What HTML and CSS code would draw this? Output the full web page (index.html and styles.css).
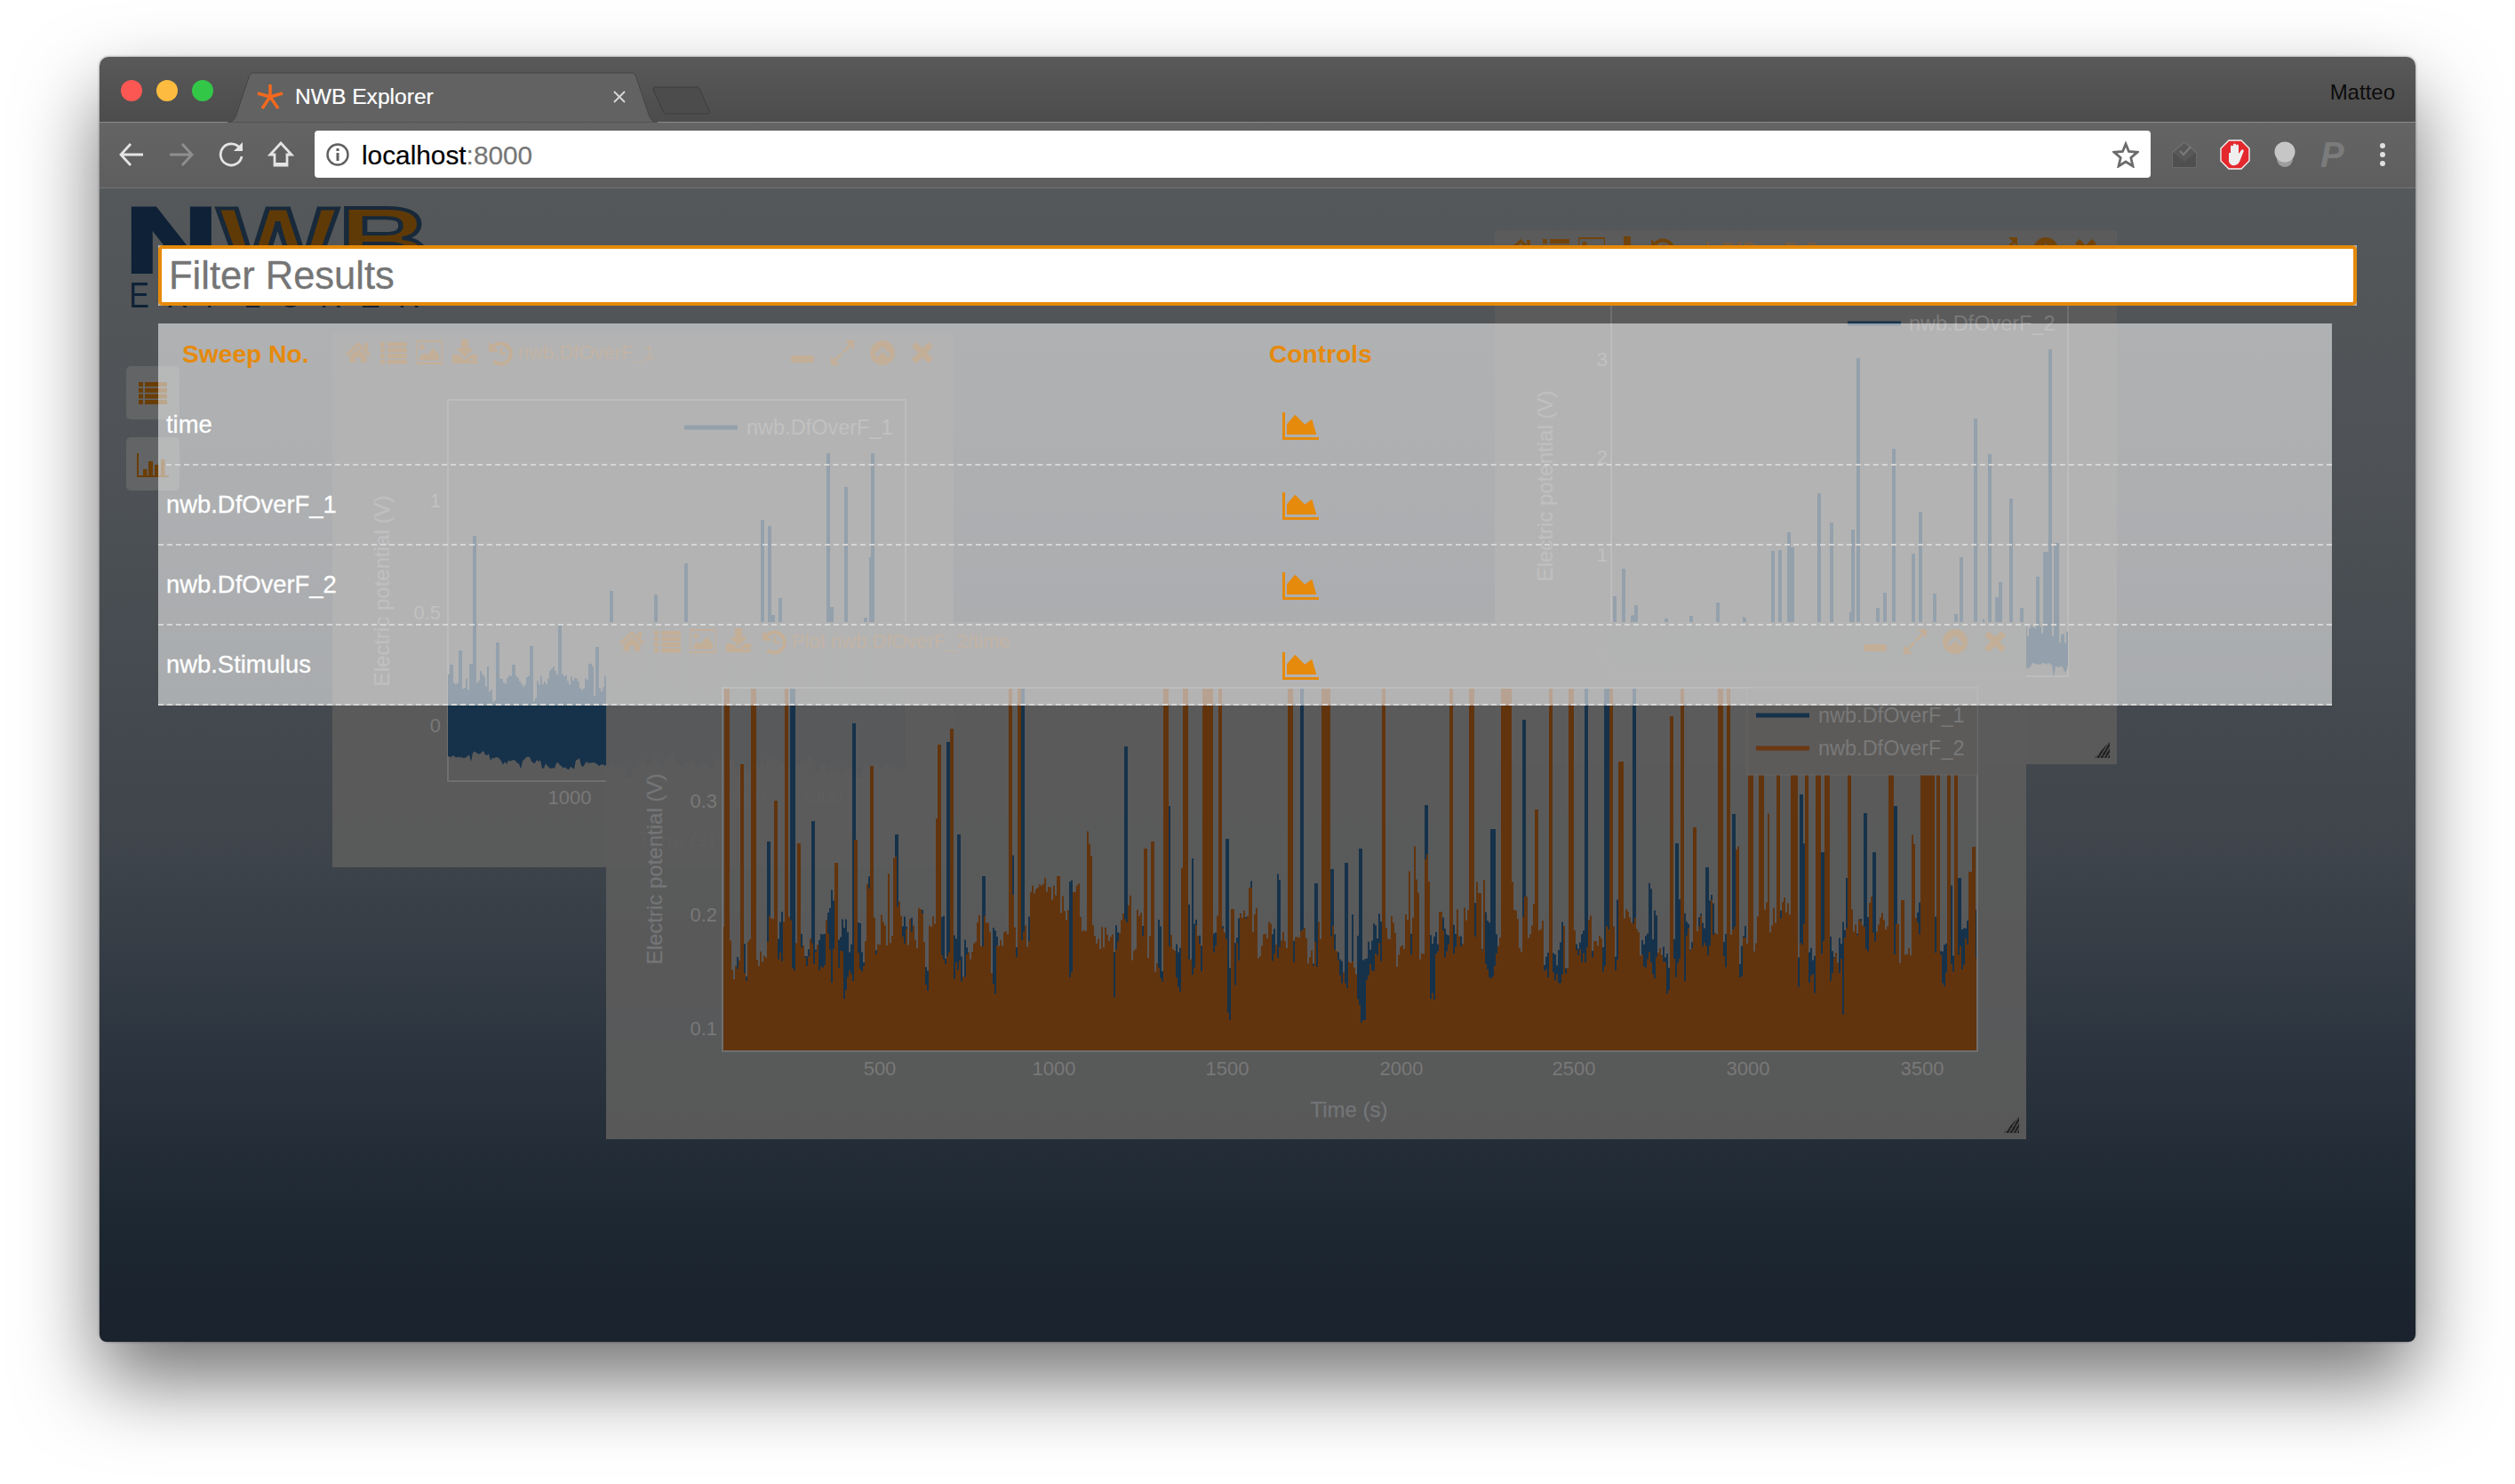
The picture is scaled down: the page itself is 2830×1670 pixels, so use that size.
FILE: index.html
```html
<!DOCTYPE html>
<html lang="en">

<head>
    <meta charset="UTF-8">
    <title>NWB Explorer</title>
    <link rel="stylesheet" href="styles.css">
</head>

<body>
    <svg class="sprites" width="0" height="0">
        <symbol id="i-home" viewBox="0 0 30 30"><path d="M15 3 L29 16 L27 18.500 L15 7.500 L3 18.500 L1 16 Z M5.500 18 L15 10 L24.500 18 V26 H18 V20 H12 V26 H5.500 Z M22 4h4v8l-4-3.500z"/></symbol>
        <symbol id="i-list" viewBox="0 0 30 30"><path d="M0 3h5v5H0z M8 3h22v5H8z M0 9.500h5v5H0z M8 9.500h22v5H8z M0 16h5v5H0z M8 16h22v5H8z M0 22.500h5v5H0z M8 22.500h22v5H8z"/></symbol>
        <symbol id="i-image" viewBox="0 0 30 30"><rect x="0" y="2" width="30" height="25" rx="2" fill="none" stroke="currentColor" stroke-width="2.200"/><circle cx="7" cy="8.500" r="2.800"/><path d="M4 23.500 V20 L9.500 15 L12.500 18 L19 9.500 L26 17 V23.500 Z"/></symbol>
        <symbol id="i-download" viewBox="0 0 30 30"><path d="M11 0h8v10h6L15 20 5 10h6z"/><path fill-rule="evenodd" d="M1 17h7l7 6 7-6h7v10H1z M20 22h3v2h-3z M25 22h2v2h-2z"/></symbol>
        <symbol id="i-undo" viewBox="0 0 30 30"><path d="M7 8 A11.500 11.500 0 1 1 7.500 24.500" fill="none" stroke="currentColor" stroke-width="4.200"/><path d="M2 3 V14 H13 Z"/><path d="M16 9 V16 H21" fill="none" stroke="currentColor" stroke-width="2.500"/></symbol>
        <symbol id="i-minus" viewBox="0 0 30 30"><rect x="2" y="18" width="26" height="8" rx="3"/></symbol>
        <symbol id="i-expand" viewBox="0 0 30 30"><path d="M18 1H28V11L24.500 7.500 L17 15 L15 13 L22.500 5.500Z M12 29H2V19L5.500 22.500 L13 15 L15 17 L7.500 24.500Z"/></symbol>
        <symbol id="i-collapse" viewBox="0 0 30 30"><path fill-rule="evenodd" d="M15 1a14 14 0 1 0 .01 0Z M15 8 L24 17 L21 20 L15 14 L9 20 L6 17Z"/></symbol>
        <symbol id="i-close" viewBox="0 0 30 30"><path d="M8 3 L15 10 L22 3 L27 8 L20 15 L27 22 L22 27 L15 20 L8 27 L3 22 L10 15 L3 8Z"/></symbol>
        <symbol id="i-area" viewBox="0 0 41 31"><path d="M0 0h3v28h38v3H0z"/><path d="M5 13.300 L14.300 2.700 L25.300 13.700 L33.300 7.700 L38.300 25 H5 Z"/></symbol>
    </svg>

    <div class="window">
        <div class="tabstrip">
            <div class="lights">
                <span class="light red"></span>
                <span class="light yellow"></span>
                <span class="light green"></span>
            </div>
            <div class="tab">
                <svg class="tab-shape" width="484" height="57" viewBox="0 0 484 57">
                    <path d="M0 57 C6 57 9 52 11 45 L24 6 C25 2 27 1 30 1 H454 C457 1 459 2 460 6 L473 45 C475 52 478 57 484 57 Z" fill="#626262" stroke="#444" stroke-width="1"/>
                </svg>
                <svg class="favicon" width="30" height="30" viewBox="0 0 30 30">
                    <path d="M15 1 V15 M15 15 L1 11 M15 15 L29 11 M15 15 L6 28 M15 15 L24 28" stroke="#f4691e" stroke-width="3.500" fill="none"/>
                </svg>
                <span class="tab-title">NWB Explorer</span>
                <svg class="tab-close" width="14" height="14" viewBox="0 0 14 14">
                    <path d="M1 1 L13 13 M13 1 L1 13" stroke="#d8d8d8" stroke-width="1.800"/>
                </svg>
            </div>
            <svg class="newtab" width="66" height="32" viewBox="0 0 66 32">
                <path d="M3 1 H50 C52 1 53 2 54 4 L64 28 C65 30 64 31 62 31 H16 C14 31 13 30 12 28 L1 4 C1 2 1 1 3 1 Z" fill="#4c4c4c" stroke="#3d3d3d"/>
            </svg>
            <span class="user">Matteo</span>
        </div>

        <div class="toolbar">
            <div class="nav">
                <svg width="30" height="30" viewBox="0 0 30 30"><path d="M28 15 H4 M14 3 L3 15 L14 27" fill="none" stroke="#e4e4e4" stroke-width="2.800"/></svg>
                <svg width="30" height="30" viewBox="0 0 30 30"><path d="M2 15 H26 M16 3 L27 15 L16 27" fill="none" stroke="#8f8f8f" stroke-width="2.800"/></svg>
                <svg width="30" height="30" viewBox="0 0 30 30"><path d="M25 8 A12 12 0 1 0 27 17" fill="none" stroke="#e4e4e4" stroke-width="2.800"/><path d="M18 11 H28 V1 Z" fill="#e4e4e4"/></svg>
                <svg width="30" height="30" viewBox="0 0 30 30"><path d="M15 2 L27 15 H22 V27 H8 V15 H3 Z" fill="none" stroke="#e4e4e4" stroke-width="2.800"/><path d="M8 24h14v4H8z" fill="#e4e4e4"/></svg>
            </div>
            <div class="omnibox">
                <svg width="26" height="26" viewBox="0 0 26 26"><circle cx="13" cy="13" r="11.500" fill="none" stroke="#5f5f5f" stroke-width="2.400"/><path d="M11.500 11h3v9h-3z M11.500 6h3v3h-3z" fill="#5f5f5f"/></svg>
                <span class="url">localhost<span class="url-port">:8000</span></span>
                <svg class="star" width="30" height="30" viewBox="0 0 30 30"><path d="M15 3 L18.500 11.500 L28 12.300 L20.800 18.500 L23 28 L15 23 L7 28 L9.200 18.500 L2 12.300 L11.500 11.500 Z" fill="none" stroke="#6b6b6b" stroke-width="2.800"/></svg>
            </div>
            <div class="extensions">
                <svg width="32" height="32" viewBox="0 0 32 32"><path d="M3 13 L16 2 L29 13 V30 H3 Z" fill="#585858" stroke="#6e6e6e" stroke-width="1.500"/><path d="M3 14 L16 24 L29 14 V30 H3 Z" fill="#4f4f4f"/><path d="M11 12 L15 16 L23 7" fill="none" stroke="#7c7c7c" stroke-width="2"/></svg>
                <svg width="34" height="34" viewBox="0 0 34 34"><path d="M10 1 H24 L33 10 V24 L24 33 H10 L1 24 V10 Z" fill="#e3292e" stroke="#f2f2f2" stroke-width="1.400"/><path d="M10 15 h2 V8 a1.500 1.500 0 0 1 3 0 V6 a1.500 1.500 0 0 1 3 0 V7 a1.500 1.500 0 0 1 3 0 V16 L24 12 a1.500 1.500 0 0 1 2.600 1.500 L22 25 C20 30 12 31 10 25 Z" fill="#efefef"/></svg>
                <svg width="30" height="32" viewBox="0 0 30 32"><circle cx="15" cy="21" r="9" fill="#9d9d9d"/><circle cx="15" cy="13" r="11.500" fill="#c6c6c6"/></svg>
                <svg width="32" height="44" viewBox="0 0 32 44"><text class="ext-p" x="1" y="36">P</text></svg>
                <svg width="30" height="32" viewBox="0 0 30 32"><circle cx="15" cy="6" r="3" fill="#e0e0e0"/><circle cx="15" cy="16" r="3" fill="#e0e0e0"/><circle cx="15" cy="26" r="3" fill="#e0e0e0"/></svg>
            </div>
        </div>

        <div class="content">
            <svg class="logo" width="335" height="119" viewBox="0 0 335 119">
                <text class="logo-big" x="-6" y="75" textLength="343" lengthAdjust="spacingAndGlyphs"><tspan class="logo-n">N</tspan><tspan class="logo-wb">WB</tspan></text>
                <text class="logo-small" x="-2" y="115" transform="scale(.85 1)" textLength="385">EXPLORER</text>
            </svg>
            <div class="sidebtn">
                <svg class="side-list" width="32" height="25" viewBox="0 0 32 25"><path d="M0 0h5v5H0z M7 0h25v5H7z M0 6.700h5v5H0z M7 6.700h25v5H7z M0 13.400h5v5H0z M7 13.400h25v5H7z M0 20h5v5H0z M7 20h25v5H7z"/></svg>
            </div>
            <div class="sidebtn">
                <svg class="side-bars" width="36" height="27" viewBox="0 0 36 27"><path d="M0 0h2v25h34v2H0z M7 18h4.500v7H7z M13 9h5v16h-5z M20 13h4.500v12H20z M27 7h4.500v18H27z"/></svg>
            </div>

            <div class="panel panel-one">
                <div class="panel-head">
                    <svg class="ico"><use href="#i-home"/></svg>
                    <svg class="ico"><use href="#i-list"/></svg>
                    <svg class="ico"><use href="#i-image"/></svg>
                    <svg class="ico"><use href="#i-download"/></svg>
                    <svg class="ico"><use href="#i-undo"/></svg>
                    <span class="panel-title">nwb.DfOverF_1</span>
                    <svg class="ico push"><use href="#i-minus"/></svg>
                    <svg class="ico"><use href="#i-expand"/></svg>
                    <svg class="ico"><use href="#i-collapse"/></svg>
                    <svg class="ico"><use href="#i-close"/></svg>
                </div>
                <svg class="plot" width="699" height="553" viewBox="0 0 699 553">
                    <rect class="frame" x="130" y="27" width="515" height="429"/>
                    <svg x="130" y="27" width="515" height="429"><path id="one-blue" class="blue"/></svg>
                    <line class="blue-line" x1="396" x2="456" y1="58" y2="58"/>
                    <text class="lbl" x="466" y="66">nwb.DfOverF_1</text>
                    <text class="tick end" x="122" y="148">1</text>
                    <text class="tick end" x="122" y="274">0.5</text>
                    <text class="tick end" x="122" y="401">0</text>
                    <text class="tick mid" x="267" y="482">1000</text>
                    <text class="tick mid" x="463" y="482">2000</text>
                    <text class="tick mid" x="550" y="482">3000</text>
                    <text class="axis mid" x="387" y="530">Time (s)</text>
                    <text class="axis mid" transform="translate(64 242) rotate(-90)">Electric potential (V)</text>
                </svg>
            </div>

            <div class="panel panel-two">
                <div class="panel-head">
                    <svg class="ico"><use href="#i-home"/></svg>
                    <svg class="ico"><use href="#i-list"/></svg>
                    <svg class="ico"><use href="#i-image"/></svg>
                    <svg class="ico"><use href="#i-download"/></svg>
                    <svg class="ico"><use href="#i-undo"/></svg>
                    <span class="panel-title">nwb.DfOverF_2</span>
                    <svg class="ico push"><use href="#i-minus"/></svg>
                    <svg class="ico"><use href="#i-expand"/></svg>
                    <svg class="ico"><use href="#i-collapse"/></svg>
                    <svg class="ico"><use href="#i-close"/></svg>
                </div>
                <svg class="plot" width="700" height="552" viewBox="0 0 700 552">
                    <rect class="frame" x="131" y="27" width="514" height="427"/>
                    <svg x="131" y="27" width="514" height="427"><path id="two-blue" class="blue"/></svg>
                    <line class="blue-line" x1="397" x2="457" y1="57" y2="57"/>
                    <text class="lbl" x="466" y="65">nwb.DfOverF_2</text>
                    <text class="tick end" x="127" y="105">3</text>
                    <text class="tick end" x="127" y="215">2</text>
                    <text class="tick end" x="127" y="325">1</text>
                    <text class="tick end" x="127" y="435">0</text>
                    <text class="axis mid" transform="translate(65 240) rotate(-90)">Electric potential (V)</text>
                </svg>
                <span class="resize"></span>
            </div>

            <div class="panel panel-main">
                <div class="panel-head">
                    <svg class="ico"><use href="#i-home"/></svg>
                    <svg class="ico"><use href="#i-list"/></svg>
                    <svg class="ico"><use href="#i-image"/></svg>
                    <svg class="ico"><use href="#i-download"/></svg>
                    <svg class="ico"><use href="#i-undo"/></svg>
                    <span class="panel-title">Plot nwb.DfOverF_2/time</span>
                    <svg class="ico push"><use href="#i-minus"/></svg>
                    <svg class="ico"><use href="#i-expand"/></svg>
                    <svg class="ico"><use href="#i-collapse"/></svg>
                    <svg class="ico"><use href="#i-close"/></svg>
                </div>
                <svg class="plot" width="1598" height="534" viewBox="0 0 1598 534">
                    <svg x="131" y="26" width="1412" height="409">
                        <path id="main-blue" class="blue"/>
                        <path id="main-orange" class="orange"/>
                    </svg>
                    <rect class="frame" x="131" y="26" width="1412" height="409"/>
                    <rect class="legend" x="1284" y="26" width="259" height="98"/>
                    <line class="blue-line" x1="1294" x2="1354" y1="57" y2="57"/>
                    <line class="orange-line" x1="1294" x2="1354" y1="94" y2="94"/>
                    <text class="lbl" x="1364" y="65">nwb.DfOverF_1</text>
                    <text class="lbl" x="1364" y="102">nwb.DfOverF_2</text>
                    <text class="tick end" x="125" y="161">0.3</text>
                    <text class="tick end" x="125" y="289">0.2</text>
                    <text class="tick end" x="125" y="417">0.1</text>
                    <text class="tick mid" x="308" y="462">500</text>
                    <text class="tick mid" x="504" y="462">1000</text>
                    <text class="tick mid" x="699" y="462">1500</text>
                    <text class="tick mid" x="895" y="462">2000</text>
                    <text class="tick mid" x="1089" y="462">2500</text>
                    <text class="tick mid" x="1285" y="462">3000</text>
                    <text class="tick mid" x="1481" y="462">3500</text>
                    <text class="axis mid" x="836" y="509">Time (s)</text>
                    <text class="axis mid" transform="translate(63 230) rotate(-90)">Electric potential (V)</text>
                </svg>
                <span class="resize"></span>
            </div>

            <div class="modal">
                <div class="filter-wrap">
                    <input class="filter" type="text" placeholder="Filter Results">
                </div>
                <div class="results">
                    <div class="results-head">
                        <span class="col-name">Sweep No.</span>
                        <span class="col-ctrl">Controls</span>
                    </div>
                    <div class="row row-first">
                        <span class="cell-name">time</span>
                        <svg class="area-ico"><use href="#i-area"/></svg>
                    </div>
                    <div class="row">
                        <span class="cell-name">nwb.DfOverF_1</span>
                        <svg class="area-ico"><use href="#i-area"/></svg>
                    </div>
                    <div class="row">
                        <span class="cell-name">nwb.DfOverF_2</span>
                        <svg class="area-ico"><use href="#i-area"/></svg>
                    </div>
                    <div class="row">
                        <span class="cell-name">nwb.Stimulus</span>
                        <svg class="area-ico"><use href="#i-area"/></svg>
                    </div>
                </div>
            </div>
        </div>
    </div>

    <script src="chart.js"></script>
</body>

</html>
```

FILE: styles.css
```css
body {
    margin: 0;
    height: 1670px;
    overflow: hidden;
    background-color: #fff;
    font-family: "Liberation Sans", Arial, sans-serif;
}

.sprites {
    position: absolute;
}

.window {
    position: relative;
    width: 2606px;
    height: 1446px;
    margin: 64px 0 0 112px;
    display: flex;
    flex-direction: column;
    border-radius: 10px 10px 8px 8px;
    overflow: hidden;
}

body::before {
    content: "";
    position: absolute;
    left: 112px;
    top: 64px;
    width: 2606px;
    height: 1446px;
    border-radius: 10px;
    box-shadow: 0 44px 90px rgba(0, 0, 0, .55), 0 0 3px rgba(0, 0, 0, .45);
}

/* tab bar */
.tabstrip {
    position: relative;
    height: 74px;
    flex: none;
    display: flex;
    align-items: flex-start;
    box-sizing: border-box;
    border-bottom: 1px solid #8a8a8a;
    background: linear-gradient(#595959, #4c4c4c);
}

.lights {
    display: flex;
    gap: 16px;
    margin: 26px 0 0 24px;
}

.light {
    width: 24px;
    height: 24px;
    border-radius: 50%;
}

.red { background-color: #fc5753; }
.yellow { background-color: #fdbc40; }
.green { background-color: #33c748; }

.tab {
    position: relative;
    width: 484px;
    height: 56px;
    margin: 17px 0 0 16px;
    display: flex;
    align-items: center;
    padding: 0 36px 0 33px;
    box-sizing: border-box;
    color: #fff;
    font-size: 24.6px;
}

.tab-shape {
    position: absolute;
    left: 0;
    top: 0;
}

.favicon,
.tab-title,
.tab-close {
    position: relative;
}

.tab-title {
    margin-left: 13px;
    -webkit-text-stroke: .2px #fff;
}

.tab-close {
    margin-left: auto;
}

.newtab {
    margin: 33px 0 0 -6px;
}

.user {
    margin: 26px 23px 0 auto;
    font-size: 24px;
    color: #0c0c0c;
}

/* address bar */
.toolbar {
    height: 74px;
    flex: none;
    display: flex;
    align-items: center;
    padding-bottom: 2px;
    box-sizing: border-box;
    border-bottom: 1px solid #747474;
    background: linear-gradient(#646464, #5e5e5e);
}

.nav {
    display: flex;
    gap: 26px;
    margin-left: 21px;
}

.omnibox {
    width: 2066px;
    height: 53px;
    margin-left: 23px;
    display: flex;
    align-items: center;
    padding: 0 13px;
    box-sizing: border-box;
    background-color: #fff;
    border-radius: 4px;
}

.url {
    margin: 3px 0 0 14px;
    font-size: 29.8px;
    color: #000;
    -webkit-text-stroke: .2px;
}

.url-port {
    color: #767676;
}

.star {
    margin-left: auto;
}

.extensions {
    display: flex;
    align-items: center;
    gap: 24px;
    margin-left: 22px;
}

.ext-p {
    font-size: 40px;
    font-weight: bold;
    font-style: italic;
    fill: #7b7b7b;
}

/* page under the dialog */
.content {
    position: relative;
    flex: 1;
    padding: 19px 0 0 30px;
    box-sizing: border-box;
    background: linear-gradient(#54585a 0, #4e5256 25%, #3e444b 58%, #2a333e 76%, #1d2731 90%, #19222d 100%);
}

.logo {
    display: block;
    margin-left: 5px;
    overflow: visible;
}

.logo-big {
    font-size: 103px;
    font-weight: bold;
}

.logo-n {
    fill: #0e2136;
    stroke: #0e2136;
    stroke-width: 4px;
}

.logo-wb {
    fill: #5f3a07;
    stroke: #17293a;
    stroke-width: 4px;
}

.logo-small {
    font-size: 40px;
    fill: #0e2136;
}

.sidebtn {
    width: 60px;
    height: 60px;
    margin-bottom: 20px;
    display: flex;
    align-items: center;
    padding-left: 14px;
    box-sizing: border-box;
    background-color: #636465;
    border-radius: 5px;
}

.sidebtn:first-of-type {
    margin-top: 62px;
}

.side-list,
.side-bars {
    fill: #6a3d05;
}

.side-bars {
    margin: 2px 0 0 -2px;
}

/* plot windows */
.panel {
    position: absolute;
    background-color: rgba(91, 91, 91, .94);
}

.panel-one {
    left: 262px;
    top: 163px;
    width: 699px;
    height: 601px;
}

.panel-two {
    left: 1570px;
    top: 47px;
    width: 700px;
    height: 601px;
}

.panel-main {
    left: 570px;
    top: 488px;
    width: 1598px;
    height: 582px;
}

.panel-head {
    height: 44px;
    margin-bottom: 4px;
    display: flex;
    align-items: center;
    gap: 10px;
    padding: 0 20px 0 14px;
    color: #7d4f1e;
}

.panel-two .panel-head {
    color: #70430c;
}

.panel-two .plot {
    margin-top: 1px;
}

.ico {
    width: 30px;
    height: 30px;
    flex: none;
    fill: currentColor;
    overflow: visible;
}

.ico.push {
    margin-left: auto;
}

.ico.push ~ .ico {
    margin-left: 5px;
}

.panel-title {
    margin-left: -5px;
    font-size: 22px;
    color: #7a5a3a;
}

.plot {
    display: block;
}

.frame {
    fill: none;
    stroke: #6f6f6f;
    stroke-width: 2px;
}

.blue { fill: #16324a; }
.orange { fill: #62340e; }

.blue-line {
    stroke: #16324a;
    stroke-width: 5px;
}

.orange-line {
    stroke: #6b3812;
    stroke-width: 5px;
}

.legend {
    fill: #5c5b5a;
    stroke: #666;
    stroke-width: 1px;
}

.lbl {
    font-size: 23.5px;
    fill: #797979;
}

.tick {
    font-size: 22px;
    fill: #787878;
}

.axis {
    font-size: 24px;
    fill: #737577;
    stroke: #737577;
    stroke-width: .3px;
}

.end { text-anchor: end; }
.mid { text-anchor: middle; }

.resize {
    position: absolute;
    right: 8px;
    bottom: 7px;
    width: 17px;
    height: 19px;
    clip-path: polygon(100% 0, 100% 100%, 0 100%);
    background: repeating-linear-gradient(-60deg, #222 0 2px, #4a4a4a 2px 3.5px);
}

/* filter dialog */
.modal {
    position: absolute;
    left: 66px;
    top: 64px;
    width: 2474px;
    display: flex;
    flex-direction: column;
    gap: 20px;
}

.filter-wrap {
    height: 68px;
    background-color: #b8b8b8;
}

.filter {
    display: block;
    width: 100%;
    height: 68px;
    box-sizing: border-box;
    padding: 0 8px;
    border: 4px solid #e58a0a;
    border-radius: 5px;
    background-color: #fff;
    outline: none;
    font: 43.5px "Liberation Sans", Arial, sans-serif;
    -webkit-text-stroke: .3px #757575;
}

.filter::placeholder {
    color: #757575;
    opacity: 1;
}

.results {
    width: 2446px;
    background-color: rgba(255, 255, 255, .54);
    color: #fff;
    font-size: 27.4px;
    -webkit-text-stroke: .3px #fff;
}

.results-head {
    height: 70px;
    padding-bottom: 2px;
    box-sizing: border-box;
    display: flex;
    align-items: center;
    color: #e68a0c;
    font-size: 28.2px;
    font-weight: bold;
    -webkit-text-stroke: 0;
}

.col-name {
    width: 1223px;
    padding-left: 27px;
}

.row {
    height: 90px;
    display: flex;
    align-items: center;
    box-sizing: border-box;
    border-bottom: 2px dashed #d6d6d6;
}

.row-first {
    margin-left: 9px;
}

.row-first .cell-name {
    width: 1247px;
    padding-left: 0;
}

.cell-name {
    width: 1256px;
    padding-left: 9px;
    box-sizing: border-box;
}

.area-ico {
    width: 41px;
    height: 31px;
    margin: 2px 0 0 9px;
    fill: #e68a0c;
}
```

FILE: chart.js
```js
// small seeded generator so the traces come out the same every time
function rng(seed) {
    return function () {
        seed = (seed * 16807) % 2147483647;
        return seed / 2147483647;
    };
}

// slow drift plus short peaks, so the trace looks chunky like the real signal
function noise(width, step, base, amp, peak, seed) {
    const r = rng(seed);
    const ys = [];
    let slow = 0, held = 0, left = 0;
    for (let x = 0; x < width; x += step) {
        slow = slow * 0.9 + (r() - 0.5) * amp * 0.45;
        if (left <= 0) {
            held = (r() - 0.5) * amp;
            if (r() < 0.09) held -= r() * peak;
            if (r() < 0.07) held += r() * amp;
            left = 1 + Math.floor(r() * 3);
        }
        left--;
        ys.push(base + slow + held);
    }
    return ys;
}

// spikes are [x, top y, width], read off the reference
function addSpikes(ys, step, spikes) {
    spikes.forEach(function (s) {
        const from = Math.floor(s[0] / step);
        const to = Math.ceil((s[0] + (s[2] || 3)) / step);
        for (let i = from; i < to && i < ys.length; i++) {
            ys[i] = Math.min(ys[i], s[1]);
        }
    });
}

function bandPath(tops, bottoms, step) {
    let d = "M0 " + bottoms[0];
    tops.forEach(function (y, i) {
        d += "L" + i * step + " " + y.toFixed(1) + "L" + (i + 1) * step + " " + y.toFixed(1);
    });
    for (let i = tops.length - 1; i >= 0; i--) {
        d += "L" + (i + 1) * step + " " + bottoms[i].toFixed(1);
    }
    return d + "Z";
}

function draw(id, tops, bottoms, step) {
    document.getElementById(id).setAttribute("d", bandPath(tops, bottoms, step));
}

const STEP = 2;

// main plot, orange on top of blue
const mainW = 1412, mainH = 409;
const flat = new Array(Math.ceil(mainW / STEP)).fill(mainH);

const blue = noise(mainW, STEP, 296, 58, 110, 4242);
addSpikes(blue, STEP, [
    [77, 0, 4], [146, 40], [337, 0, 3], [452, 66], [252, 61], [195, 165], [265, 165], [100, 150],
    [51, 173], [501, 133], [651, 0], [566, 170], [717, 181], [701, 197], [684, 204], [666, 220],
    [292, 212], [970, 0, 4], [992, 0, 8], [1024, 0], [900, 36], [790, 132, 4], [865, 159, 4],
    [1072, 175], [1137, 142], [1212, 120], [1284, 141, 4], [1318, 133], [1391, 214], [1107, 202],
    [1264, 214], [1295, 185], [1237, 185], [498, 0, 3]
]);
draw("main-blue", blue, flat, STEP);

const orange = noise(mainW, STEP, 292, 60, 100, 90210);
addSpikes(orange, STEP, [
    [3, 0, 4], [32, 0, 5], [71, 0, 3], [323, 0, 3], [332, 0, 3], [497, 0, 5], [519, 0, 4], [541, 0, 10],
    [559, 0, 3], [636, 0, 5], [675, 0, 8], [742, 0, 4], [818, 0, 4], [841, 0, 5], [876, 0, 12], [931, 0, 3],
    [953, 0, 5], [998, 0, 4], [1078, 0, 4], [1121, 0, 5], [1130, 0, 3], [1154, 0, 5], [1167, 0, 5],
    [1187, 0, 3], [1203, 0, 6], [1218, 0, 4], [1230, 0, 6], [1241, 0, 4], [1267, 0, 3], [1313, 0, 4],
    [1348, 0, 16], [1366, 0, 4], [1379, 0, 3], [1386, 0, 4],
    [256, 46], [242, 64], [166, 88, 4], [59, 127], [20, 86], [240, 147, 5], [148, 171], [483, 173],
    [474, 181], [592, 225], [376, 212], [395, 230], [558, 181, 4], [572, 249], [516, 203], [127, 197],
    [85, 175], [1009, 83, 4], [1066, 32], [1092, 157], [914, 137], [1407, 179], [1402, 207], [1327, 239],
    [903, 235], [851, 231], [807, 252]
]);
draw("main-orange", orange, flat, STEP);

// window behind, left
const oneW = 515;
const oneTop = noise(oneW, STEP, 318, 18, 30, 777);
addSpikes(oneTop, STEP, [
    [29, 153], [353, 135], [361, 142], [426, 60], [447, 98], [477, 60], [267, 184], [183, 215], [233, 219],
    [372, 223], [364, 242], [431, 233], [468, 245], [474, 177], [124, 253], [55, 273], [12, 282], [93, 277],
    [166, 278], [3, 298], [72, 298]
]);
draw("one-blue", oneTop, noise(oneW, STEP, 410, 12, 0, 555), STEP);

// window behind, right
const twoW = 514;
const twoTop = noise(twoW, STEP, 380, 16, 20, 1313);
addSpikes(twoTop, STEP, [
    [276, 69], [492, 59], [408, 137], [317, 171], [424, 177], [232, 221], [448, 227], [347, 242], [246, 254],
    [271, 262], [198, 265], [180, 286], [189, 285], [203, 282], [339, 289], [392, 293], [12, 306], [3, 337],
    [306, 333], [363, 334], [437, 321], [432, 338], [478, 315], [501, 318], [26, 347], [119, 344], [89, 359],
    [61, 362], [298, 350], [387, 357], [460, 350], [487, 287, 4], [498, 277, 5]
]);
draw("two-blue", twoTop, noise(twoW, STEP, 415, 10, 0, 2024), STEP);
```
